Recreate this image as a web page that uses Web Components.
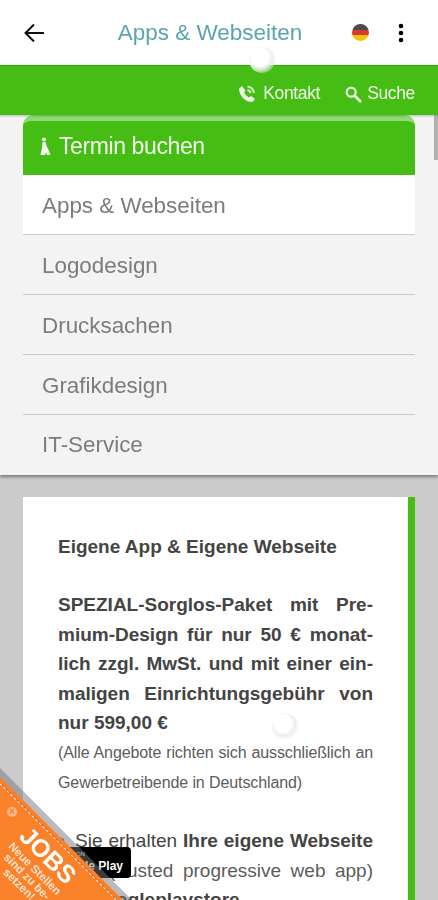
<!DOCTYPE html>
<html lang="de"><head><meta charset="utf-8"><title>Apps & Webseiten</title>
<style>
html,body{margin:0;padding:0;height:900px;overflow:hidden;background:#cbcbcb;font-family:"Liberation Sans",Arial,sans-serif}
app-page{display:block}
</style></head><body>
<app-page>
  <app-bar title="Apps &amp; Webseiten"></app-bar>
  <action-bar></action-bar>
  <side-menu>
    <menu-item active>Apps &amp; Webseiten</menu-item>
    <menu-item>Logodesign</menu-item>
    <menu-item>Drucksachen</menu-item>
    <menu-item>Grafikdesign</menu-item>
    <menu-item last>IT-Service</menu-item>
  </side-menu>
  <content-card></content-card>
  <load-spinner style="left:249px;top:47px"></load-spinner>
  <load-spinner style="left:272px;top:713px"></load-spinner>
  <jobs-ribbon></jobs-ribbon>
  <page-scrollbar></page-scrollbar>
</app-page>
<script>
function def(name, css, html, init){
  customElements.define(name, class extends HTMLElement{
    constructor(){super();const r=this.attachShadow({mode:'open'});r.innerHTML='<style>'+css+'</style>'+(typeof html==='function'?html(this):html);}
    connectedCallback(){if(init)init(this);}
  });
}
def('app-bar',`:host{display:flex;align-items:center;height:65px;background:#fff;position:relative}
.back{width:24px;height:24px;margin-left:22px;flex:none}
h1{flex:1;margin:0;text-align:center;font:400 22.5px "Liberation Sans",sans-serif;color:#5aa5b0;position:relative;left:13.5px}
.flag{width:17px;height:17px;border-radius:50%;flex:none;margin-right:29px;margin-left:5px;background:linear-gradient(#4a4a4a 0 33%,#d8392b 33% 66%,#f4c20d 66%);filter:blur(.5px)}
.more{width:6px;height:20px;flex:none;margin-right:34px}`,
`<svg class="back" viewBox="0 0 24 24"><path d="M22 12H3.500M12 3.500 3.500 12l8.500 8.500" fill="none" stroke="#111" stroke-width="2"/></svg>
<h1 id="t"></h1><span class="flag"></span>
<svg class="more" viewBox="0 0 6 20"><circle cx="3" cy="3" r="2.3"/><circle cx="3" cy="10" r="2.3"/><circle cx="3" cy="17" r="2.3"/></svg>`,
el=>{el.shadowRoot.getElementById('t').textContent=el.getAttribute('title');el.removeAttribute('title')});
def('action-bar',`:host{display:flex;align-items:center;justify-content:flex-end;height:50px;box-sizing:border-box;padding:6px 23px 0 0;background:#46bd14;border-top:1px solid #2faa0a;color:#eef9e8;font:400 17.5px "Liberation Sans",sans-serif;letter-spacing:-.35px;box-shadow:0 1px 2px rgba(0,0,0,.25);position:relative;z-index:2}
a{display:flex;align-items:center;gap:6px}a+a{margin-left:24px}svg{width:20px;height:20px;flex:none}`,
`<a><svg viewBox="0 0 20 20"><path d="M5 2 2 4.500c0 7 6 13.500 13.500 13.500l2.500-3-4-3-2 1.500c-2-1-4-3-5-5.500l1.500-1.500z" fill="#eef9e8"/><path d="M10.500 2.500c3.500.5 6 3 6.500 6.500M10.500 6c1.500.3 2.700 1.500 3 3" fill="none" stroke="#cdeebd" stroke-width="2"/></svg>Kontakt</a>
<a style="gap:5px"><svg viewBox="0 0 20 20" style="width:18px"><circle cx="8" cy="8" r="5" fill="none" stroke="#eef9e8" stroke-width="2.400"/><path d="m12 12 6 6" stroke="#eef9e8" stroke-width="3" stroke-linecap="round"/></svg>Suche</a>`);
def('side-menu',`:host{display:block;background:#f3f3f3;padding:0 23px;height:360px;box-sizing:border-box;box-shadow:0 2px 3px rgba(0,0,0,.4);position:relative;z-index:1}
.book{display:flex;align-items:center;height:60px;box-sizing:border-box;background:#46bd14;border-top:6px solid #8fdb73;border-radius:10px 10px 0 0;color:#f2fbee;font:400 23px "Liberation Sans",sans-serif;letter-spacing:-.4px;padding:0 0 4px 17px;gap:8px}
svg{width:11px;height:19px;flex:none}`,
`<div class="book"><svg viewBox="0 0 11 19"><path d="M2.500 5h3l1.500 5 2 4 1.500 4H7l-1-3-1 3H.5L2 11z" fill="#f2fbee"/><circle cx="4" cy="2.500" r="2" fill="#f2fbee"/></svg>Termin buchen</div><slot></slot>`);
def('menu-item',`:host{display:flex;align-items:center;height:60px;box-sizing:border-box;padding:2px 0 0 19px;font:400 22.4px "Liberation Sans",sans-serif;color:#7c7c7c;border-bottom:1px solid #c9c9c9;background:transparent}
:host([active]){background:#fff;border-bottom:1px solid #ccc}
:host([last]){border-bottom:0;padding-top:0}`,`<slot></slot>`);
def('content-card',`:host{display:block;margin:22px 23px 0;background:#fff;border-right:7px solid #46bd14;padding:35px 35px 0;height:500px;box-sizing:border-box;color:#444;font:400 19px/29.400px "Liberation Sans",sans-serif}
p{margin:0}b{font-weight:700}.s{font-size:16px;color:#5c5c5c;line-height:29.500px;display:block;letter-spacing:-.1px}.s.f{margin-top:1px}.gap{height:29px}
.l{display:block;text-align:justify;text-align-last:justify}.bul{display:inline-block;width:17px}.t{color:#5c5c5c}`,
`<p style="font-weight:700">Eigene App &amp; Eigene Webseite</p><div class="gap"></div>
<p style="font-weight:700"><span class="l">SPEZIAL-Sorglos-Paket mit Pre-</span><span class="l">mium-Design für nur 50 € monat-</span><span class="l">lich zzgl. MwSt. und mit einer ein-</span><span class="l">maligen Einrichtungsgebühr von</span><span>nur 599,00 €</span></p>
<span class="s l f">(Alle Angebote richten sich ausschließlich an</span><span class="s">Gewerbetreibende in Deutschland)</span><div class="gap"></div>
<p><span class="l"><span class="bul">•</span>Sie erhalten <b>Ihre eigene Webseite</b></span><span class="l t">PWA (trusted progressive web app)</span><span>auf <b>Googleplaystore.</b></span></p>`);
def('load-spinner',`:host{position:absolute;width:26px;height:26px;border-radius:50%;background:radial-gradient(circle at 42% 40%,#fff 0 40%,rgba(236,236,236,.9) 55%,rgba(236,236,236,.5) 70%,transparent 90%);filter:blur(.7px);z-index:5}`,``);
def('jobs-ribbon',`:host{position:absolute;left:0;bottom:0;width:170px;height:135px;z-index:6;overflow:hidden;display:block}
.shadow{position:absolute;inset:0;background:rgba(120,120,120,.5);clip-path:polygon(0 3px,132px 135px,0 135px)}
.tri{position:absolute;inset:0;background:#f9822b;clip-path:polygon(0 12px,123px 135px,0 135px)}
.line{position:absolute;left:0;top:18px;width:175px;border-top:1.500px dashed #fbeee2;transform-origin:0 0;transform:rotate(45deg)}
.line2{position:absolute;left:0;top:17px;width:175px;border-top:1px solid #b5442a;transform-origin:0 0;transform:rotate(45deg);opacity:.5}
.x{position:absolute;left:7px;top:42px;width:10px;height:10px;border-radius:50%;background:#f8b48a;color:#f9822b;font:700 10px/10px "Liberation Sans",sans-serif;text-align:center}
.txt{position:absolute;left:-54.500px;top:72.500px;width:180px;transform:rotate(45deg);text-align:center;color:#fff}
.j{font:700 25px/25px "Liberation Sans",sans-serif;margin-bottom:1px}
.n{font:700 11.500px/11px "Liberation Sans",sans-serif;color:#ffe3cf}`,
`<div class="shadow"></div><div class="tri"></div><div class="line2"></div><div class="line"></div><div class="x">×</div>
<div class="txt"><div class="j">JOBS</div><div class="n">Neue Stellen<br>sind zu be-<br>setzen!</div></div>`);
def('page-scrollbar',`:host{position:absolute;right:0;top:115px;width:4px;height:45px;background:rgba(120,120,120,.55);z-index:3}`,``);
def('app-page',`:host{display:block;position:relative;height:900px;overflow:hidden;filter:blur(.4px)}
.play{position:absolute;left:40px;top:847px;width:91px;height:31px;background:#000;border-radius:4px;color:#fff;box-sizing:border-box;padding:3px 8px 0 0;z-index:4;text-align:right;white-space:nowrap}
.play i{display:block;font:400 6px/8px "Liberation Sans",sans-serif;text-align:left;padding-left:15px}
.play span{display:block;font:700 12px/14px "Liberation Sans",sans-serif;margin-top:1px}`,
`<slot></slot><div class="play"><i>GET IT ON</i><span>Google Play</span></div>`);
</script>
</body></html>
